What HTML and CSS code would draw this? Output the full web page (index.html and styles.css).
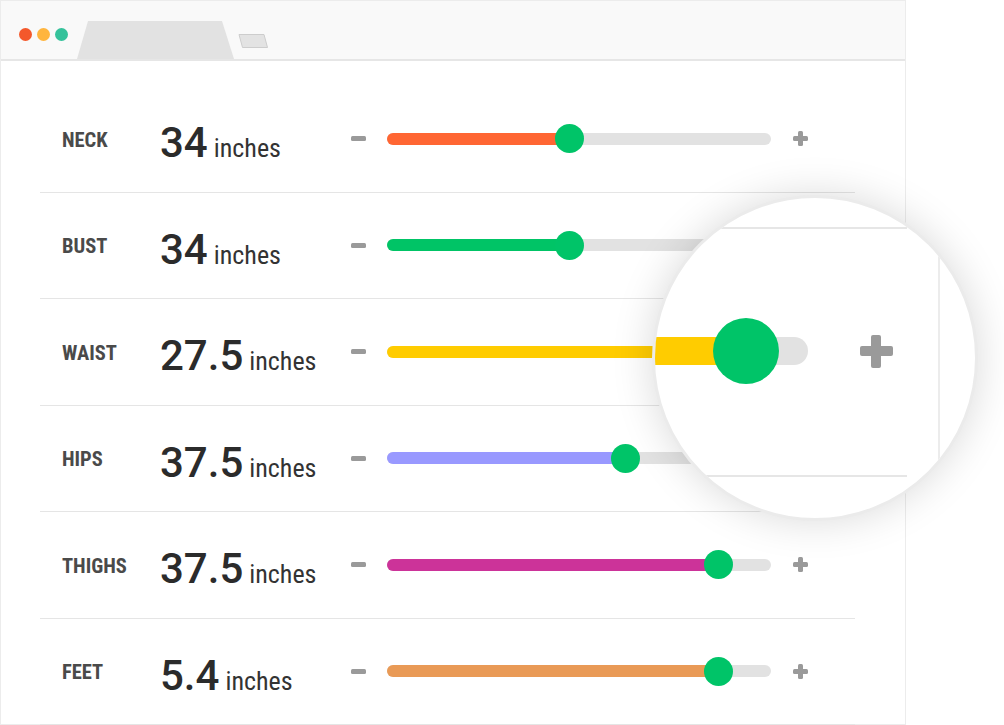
FILE: index.html
```html
<!DOCTYPE html>
<html>
<head>
<meta charset="utf-8">
<link rel="stylesheet" href="styles.css">
</head>
<body>
<div class="window">
  <div class="topbar">
    <div class="dots"><span class="dot red"></span><span class="dot yellow"></span><span class="dot green"></span></div>
    <svg class="tab" width="157" height="38" viewBox="0 0 157 38"><polygon points="11,0 145,0 157,38 0,38" fill="#e2e2e2"/></svg>
    <svg class="newtab" width="30" height="14" viewBox="0 0 30 14"><polygon points="1,0.5 26,0.5 29.5,13.5 4.5,13.5" fill="#e3e3e3" stroke="#cdcdcd" stroke-width="1"/></svg>
  </div>
  <div class="content">
    <div class="row">
      <div class="label">NECK</div>
      <div class="value"><span class="num">34</span><span class="unit">inches</span></div>
      <div class="minus"></div>
      <div class="track"><div class="fill neck" style="width:47.4%"></div><div class="thumb" style="left:47.4%"></div></div>
      <div class="plus"></div>
    </div>
    <div class="row">
      <div class="label">BUST</div>
      <div class="value"><span class="num">34</span><span class="unit">inches</span></div>
      <div class="minus"></div>
      <div class="track"><div class="fill bust" style="width:47.4%"></div><div class="thumb" style="left:47.4%"></div></div>
      <div class="plus"></div>
    </div>
    <div class="row">
      <div class="label">WAIST</div>
      <div class="value"><span class="num">27.5</span><span class="unit">inches</span></div>
      <div class="minus"></div>
      <div class="track"><div class="fill waist" style="width:80%"></div><div class="thumb" style="left:80%"></div></div>
      <div class="plus"></div>
    </div>
    <div class="row">
      <div class="label">HIPS</div>
      <div class="value"><span class="num">37.5</span><span class="unit">inches</span></div>
      <div class="minus"></div>
      <div class="track"><div class="fill hips" style="width:62%"></div><div class="thumb" style="left:62%"></div></div>
      <div class="plus"></div>
    </div>
    <div class="row">
      <div class="label">THIGHS</div>
      <div class="value"><span class="num">37.5</span><span class="unit">inches</span></div>
      <div class="minus"></div>
      <div class="track"><div class="fill thighs" style="width:86.2%"></div><div class="thumb" style="left:86.2%"></div></div>
      <div class="plus"></div>
    </div>
    <div class="row">
      <div class="label">FEET</div>
      <div class="value"><span class="num">5.4</span><span class="unit">inches</span></div>
      <div class="minus"></div>
      <div class="track"><div class="fill feet" style="width:86.2%"></div><div class="thumb" style="left:86.2%"></div></div>
      <div class="plus"></div>
    </div>
  </div>
  <div class="lens">
    <div class="lens-hline l1"></div>
    <div class="lens-hline l2"></div>
    <div class="lens-vline"></div>
    <div class="lens-track"></div>
    <div class="lens-fill"></div>
    <div class="lens-thumb"></div>
    <div class="lens-plus"></div>
  </div>
</div>
</body>
</html>
```
FILE: styles.css
```css
html, body {
  margin: 0;
  padding: 0;
  background: #ffffff;
}
body {
  width: 1004px;
  height: 725px;
  overflow: hidden;
  font-family: "Roboto", "Liberation Sans", sans-serif;
}
.window {
  position: relative;
  width: 906px;
  height: 725px;
  box-sizing: border-box;
  border: 1px solid #ececec;
  background: #ffffff;
}
.topbar {
  height: 58px;
  background: #f9f9f9;
  border-bottom: 2px solid #e6e6e6;
  display: flex;
  align-items: flex-end;
  padding-left: 17.5px;
}
.dots {
  display: flex;
  gap: 5px;
  margin-bottom: 18px;
}
.dot {
  width: 13px;
  height: 13px;
  border-radius: 50%;
}
.red { background: #f4582b; }
.yellow { background: #ffb53e; }
.green { background: #35c29b; }
.tab {
  display: block;
  margin-left: 9.5px;
}
.newtab {
  display: block;
  margin-left: 4px;
  margin-bottom: 11.5px;
}
.content {
  padding: 25px 0 0 39px;
}
.row {
  width: 815px;
  height: 106.5px;
  box-sizing: border-box;
  border-bottom: 1px solid #e5e5e5;
  display: flex;
  align-items: center;
  padding-left: 22px;
}
.label {
  width: 98px;
  font-family: "Liberation Sans Narrow", "Roboto Condensed", "Roboto", sans-serif;
  font-weight: bold;
  font-size: 20.5px;
  color: #4a4a4a;
  margin-top: 2px;
}
.value {
  width: 191px;
  display: flex;
  align-items: baseline;
  margin-top: 9px;
}
.num {
  font-family: "Roboto", sans-serif;
  font-weight: 500;
  font-size: 42px;
  line-height: 1;
  color: #2b2b2b;
}
.unit {
  font-family: "Liberation Sans Narrow", "Roboto Condensed", "Roboto", sans-serif;
  font-size: 26px;
  line-height: 1;
  color: #333333;
  margin-left: 6px;
}
.minus {
  width: 15px;
  height: 5px;
  border-radius: 1.5px;
  background: #9a9a9a;
}
.track {
  position: relative;
  width: 384px;
  height: 12px;
  margin-left: 21px;
  border-radius: 6px;
  background: #e2e2e2;
}
.fill {
  height: 12px;
  border-radius: 6px 0 0 6px;
}
.neck { background: #ff6633; }
.bust { background: #00c466; }
.waist { background: #ffcc00; }
.hips { background: #9999ff; }
.thighs { background: #cc3399; }
.feet { background: #e99a56; }
.thumb {
  position: absolute;
  top: 50%;
  width: 29px;
  height: 29px;
  margin: -14.5px 0 0 -14.5px;
  border-radius: 50%;
  background: #00c468;
}
.plus {
  position: relative;
  width: 15px;
  height: 15px;
  margin-left: 22px;
}
.plus::before, .plus::after {
  content: "";
  position: absolute;
  background: #9a9a9a;
  border-radius: 1.5px;
}
.plus::before {
  left: 0;
  top: 5px;
  width: 15px;
  height: 5px;
}
.plus::after {
  left: 5px;
  top: 0;
  width: 5px;
  height: 15px;
}
.lens {
  position: absolute;
  left: 651px;
  top: 194px;
  width: 326px;
  height: 326px;
  box-sizing: border-box;
  border: 3px solid #ebebeb;
  border-radius: 50%;
  background: #ffffff;
  overflow: hidden;
  box-shadow: 0 0 42px rgba(0, 0, 0, 0.15);
}
.lens-hline {
  position: absolute;
  left: 0;
  width: 252px;
  height: 2px;
  background: #e6e6e6;
}
.l1 { top: 29px; }
.l2 { top: 277px; }
.lens-vline {
  position: absolute;
  left: 283px;
  top: 0;
  width: 2px;
  height: 100%;
  background: #ececec;
}
.lens-track {
  position: absolute;
  left: 0;
  top: 139px;
  width: 153px;
  height: 28px;
  border-radius: 0 14px 14px 0;
  background: #e2e2e2;
}
.lens-fill {
  position: absolute;
  left: 0;
  top: 139px;
  width: 91px;
  height: 28px;
  background: #ffcc00;
}
.lens-thumb {
  position: absolute;
  left: 58px;
  top: 120px;
  width: 66px;
  height: 66px;
  border-radius: 50%;
  background: #00c468;
}
.lens-plus {
  position: absolute;
  left: 204.5px;
  top: 136.5px;
  width: 33px;
  height: 33px;
}
.lens-plus::before, .lens-plus::after {
  content: "";
  position: absolute;
  background: #9a9a9a;
  border-radius: 2px;
}
.lens-plus::before {
  left: 0;
  top: 11.5px;
  width: 33px;
  height: 10px;
}
.lens-plus::after {
  left: 11.5px;
  top: 0;
  width: 10px;
  height: 33px;
}
```
